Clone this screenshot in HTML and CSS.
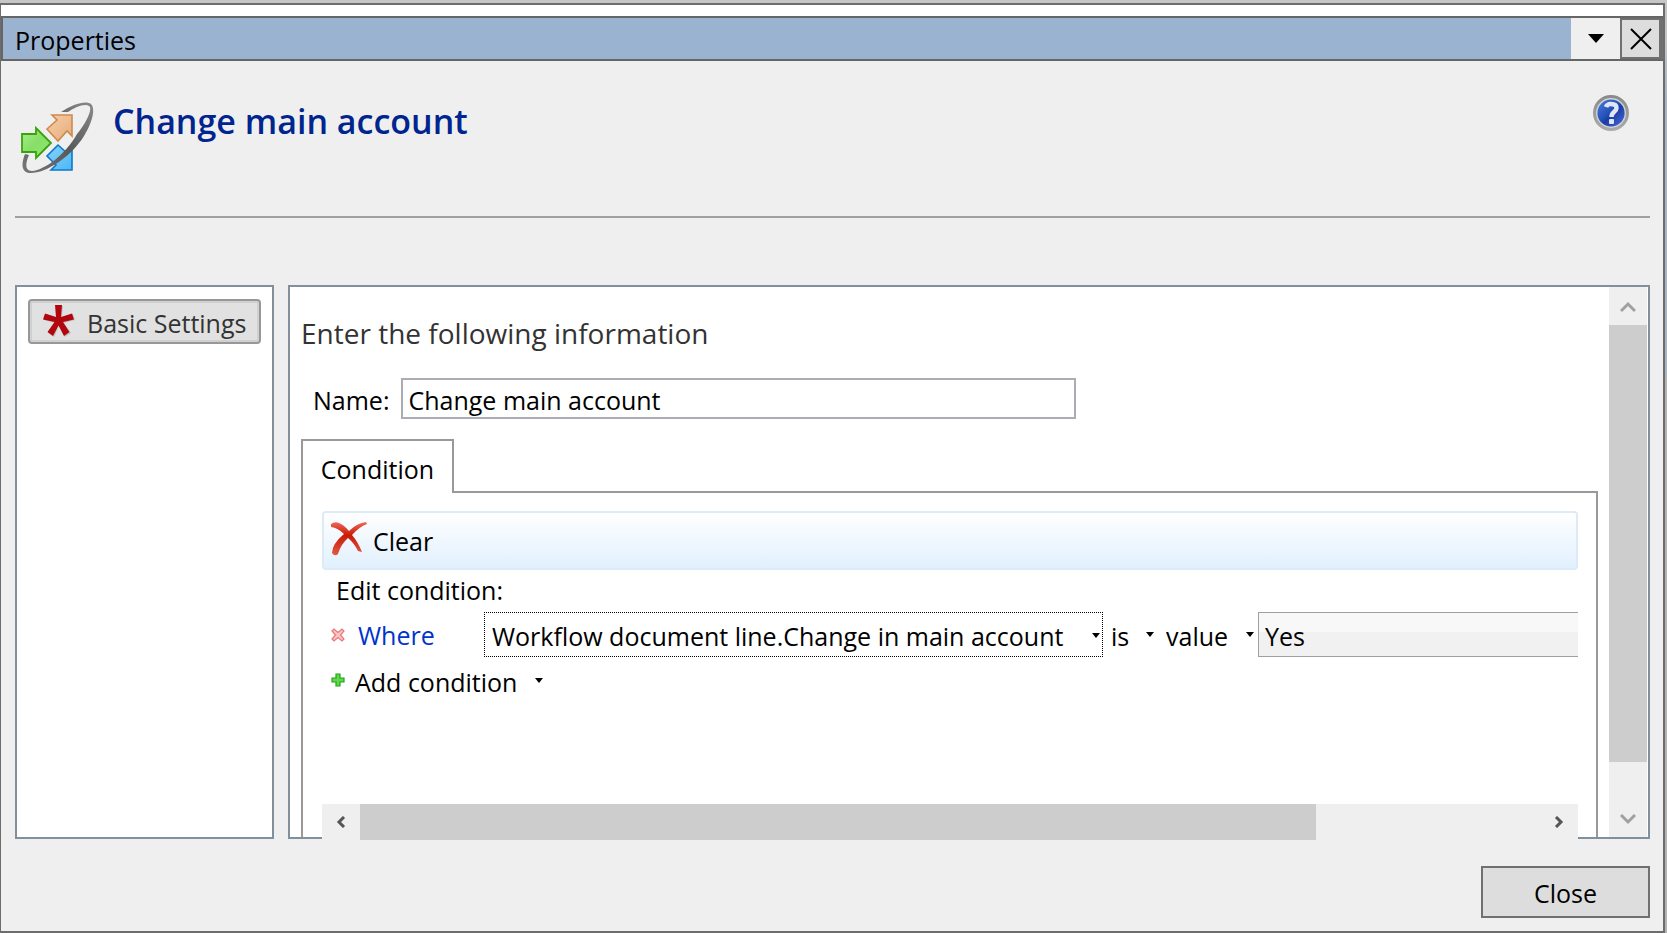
FILE: index.html
```html
<!DOCTYPE html>
<html lang="en">
<head>
<meta charset="utf-8">
<title>Properties</title>
<link rel="stylesheet" href="styles.css">
</head>
<body>
<div class="window">
  <header class="titlebar">
    <span class="titlebar-text">Properties</span>
    <button class="title-menu" aria-label="Window menu"><svg width="16" height="10" viewBox="0 0 16 10"><path d="M0 0H16L8 9Z"/></svg></button>
    <button class="title-close" aria-label="Close window"><svg width="22" height="22" viewBox="0 0 22 22"><path d="M1 1L21 21M21 1L1 21" stroke="#000" stroke-width="2" fill="none"/></svg></button>
  </header>

  <section class="banner">
    <svg class="logo" width="74" height="72" viewBox="0 0 74 72">
      <defs>
        <linearGradient id="green" x1="0" y1="0" x2="1" y2="1"><stop offset="0" stop-color="#a9ee8c"/><stop offset=".5" stop-color="#86df66"/><stop offset="1" stop-color="#92e874"/></linearGradient>
        <linearGradient id="orange" x1="0" y1="0" x2="1" y2="1"><stop offset="0" stop-color="#f8cfa6"/><stop offset="1" stop-color="#e5ab7c"/></linearGradient>
        <linearGradient id="blue" x1="0" y1="0" x2="1" y2="1"><stop offset="0" stop-color="#86d3fb"/><stop offset="1" stop-color="#4cb8f5"/></linearGradient>
        <linearGradient id="ring" x1="1" y1="0" x2="0" y2="1"><stop offset="0" stop-color="#8a8a8a"/><stop offset=".5" stop-color="#58595b"/><stop offset="1" stop-color="#777"/></linearGradient>
      </defs>
      <path d="M32 13H52V34L47 29L38 39L27 27L37 18Z" fill="url(#orange)" stroke="#cf8a50" stroke-width="1.6"/>
      <path d="M38 43L27 54L36 63L31 68H52V46L47 51Z" fill="url(#blue)" stroke="#0c78cc" stroke-width="1.6"/>
      <path d="M2 32H16V26L31 41L16 56V50H2Z" fill="url(#green)" stroke="#3aa30c" stroke-width="1.8"/>
      <path d="M41 10C53 2 66-2 71 2C76 7 72 21 64 34C51 55 26 71 11 71C1 71 1 62 5 52L9 53C5 62 5 69 12 69C25 68 46 52 57 32C67 20 73 6 69 4C65 1 55 5 48 10Z" fill="url(#ring)"/>
    </svg>
    <h1 class="heading">Change main account</h1>
    <button class="help" aria-label="Help">
      <svg width="38" height="38" viewBox="0 0 38 38">
        <defs>
          <linearGradient id="rim" x1="0" y1="0" x2="0" y2="1"><stop offset="0" stop-color="#8b8b8b"/><stop offset="1" stop-color="#aaa"/></linearGradient>
          <linearGradient id="ball" x1="0" y1="0" x2="1" y2="1"><stop offset="0" stop-color="#4c7ddb"/><stop offset=".45" stop-color="#2450b8"/><stop offset=".55" stop-color="#1a3da2"/><stop offset="1" stop-color="#4a6be0"/></linearGradient>
        </defs>
        <circle cx="19" cy="19" r="16.5" fill="#d3d3d3" stroke="url(#rim)" stroke-width="3"/>
        <circle cx="19" cy="19" r="13.6" fill="url(#ball)"/>
        <path d="M14 13Q15 10 19 10Q24.500 10 24.500 14Q24.500 16 22 18Q19.500 20 19.500 23" fill="none" stroke="#dfe6f8" stroke-width="4.500"/>
        <rect x="17" y="25" width="5" height="5" rx="1" fill="#dfe6f8"/>
      </svg>
    </button>
  </section>

  <main class="panels">
    <nav class="sidebar">
      <button class="nav-button">
        <svg width="34" height="34" viewBox="0 0 34 34">
          <path d="M14 1H21L20 12L31 9L33 15L22 18L29 28L23 32L17 21L12 32L6 28L13 18L2 15L4 9L14 12Z" fill="#999" opacity=".45"/>
          <path d="M13 0H20L19 12L30 8.500L32 14.500L21 17L27.500 27L22 31L16.500 20.500L11 31L5.500 27L12.500 17L1 14.500L3 8.500L14 12Z" fill="#b2060e"/>
        </svg>
        <span>Basic Settings</span>
      </button>
    </nav>

    <section class="content">
      <div class="form">
        <h2 class="intro">Enter the following information</h2>
        <div class="name-row">
          <label for="name">Name:</label>
          <input id="name" class="name-input" type="text" value="Change main account">
        </div>
        <div class="tabs" role="tablist">
          <button class="tab" role="tab" aria-selected="true">Condition</button>
          <span class="tab-line"></span>
        </div>
        <div class="tab-body">
          <div class="toolbar">
            <button class="clear">
              <svg width="36" height="34" viewBox="0 0 36 34">
                <defs><linearGradient id="cross" x1="0" y1="0" x2="0" y2="1"><stop offset="0" stop-color="#f0695c"/><stop offset=".4" stop-color="#c91a06"/><stop offset="1" stop-color="#e25848"/></linearGradient></defs>
                <path d="M0 2Q4-1 8 1Q13 3 18 9Q26 1 35 0L36 2Q28 5 21 13Q27 20 31 30L27 29Q23 21 17 16Q10 22 7 32Q4 35 1 31Q1 22 13 12Q7 6 0 5Z" fill="url(#cross)"/>
              </svg>
              <span>Clear</span>
            </button>
          </div>
          <p class="edit-label">Edit condition:</p>
          <div class="where-row">
            <button class="remove" aria-label="Remove condition"><svg width="14" height="14" viewBox="0 0 14 14"><path d="M1 3L3 1L7 4.500L11 1L13 3L9.500 7L13 11L11 13L7 9.500L3 13L1 11L4.500 7Z" fill="#fbc4c4" stroke="#e87878" stroke-width="1.200"/></svg></button>
            <a class="where" href="#">Where</a>
            <span class="pick pick-field"><select aria-label="Field"><option>Workflow document line.Change in main account</option></select></span>
            <span class="pick pick-operator"><select aria-label="Operator"><option>is</option></select></span>
            <span class="pick pick-kind"><select aria-label="Compare with"><option>value</option></select></span>
            <select class="value-select" aria-label="Value"><option>Yes</option></select>
          </div>
          <button class="add">
            <svg width="14" height="14" viewBox="0 0 14 14"><path d="M5 1H9V5H13V9H9V13H5V9H1V5H5Z" fill="#5fd84a" stroke="#27a01c" stroke-width="1.200"/></svg>
            <span>Add condition</span>
            <i class="arrow"></i>
          </button>
          <div class="scroll-x">
            <button class="scroll-button" aria-label="Scroll left"><svg width="10" height="12" viewBox="0 0 10 12"><path d="M8 1L3 6L8 11" fill="none" stroke="#555" stroke-width="3"/></svg></button>
            <div class="track-x"><div class="thumb-x"></div></div>
            <button class="scroll-button" aria-label="Scroll right"><svg width="10" height="12" viewBox="0 0 10 12"><path d="M2 1L7 6L2 11" fill="none" stroke="#555" stroke-width="3"/></svg></button>
          </div>
        </div>
      </div>
      <div class="scroll-y">
        <button class="scroll-button" aria-label="Scroll up"><svg width="16" height="12" viewBox="0 0 16 12"><path d="M1 10L8 3L15 10" fill="none" stroke="#a0a0a0" stroke-width="3"/></svg></button>
        <div class="track-y"><div class="thumb-y"></div></div>
        <button class="scroll-button" aria-label="Scroll down"><svg width="16" height="12" viewBox="0 0 16 12"><path d="M1 2L8 9L15 2" fill="none" stroke="#a0a0a0" stroke-width="3"/></svg></button>
      </div>
    </section>
  </main>

  <footer class="footer">
    <button class="close">Close</button>
  </footer>
</div>
</body>
</html>
```
FILE: styles.css
```css
* { box-sizing: border-box; }

body {
  margin: 0;
  min-height: 100vh;
  display: flex;
  padding: 3px 2px 0 0;
  background: linear-gradient(#c6c6c6 0, #c6c6c6 40px, #aab4c2 100px, #aab4c2 370px, #b4b4b4 380px);
  font-family: "Open Sans", "Noto Sans", sans-serif;
  font-size: 25px;
  line-height: 34px;
  color: #000;
}

button, input, select {
  font: inherit;
  color: inherit;
  margin: 0;
  padding: 0;
  border: 0;
  border-radius: 0;
  background: none;
}

svg { display: block; flex: none; }

.window {
  flex: 1;
  min-width: 0;
  display: flex;
  flex-direction: column;
  background: #efefef;
  border: solid #6d6d6d;
  border-width: 2px 2px 2px 1px;
}

.titlebar {
  display: flex;
  height: 45px;
  margin-top: 11px;
  border: solid #666;
  border-width: 2px 0 2px 2px;
  background: #99b3d1;
  box-shadow: 0 -11px #fff;
}
.titlebar-text { flex: 1; padding: 5px 12px 0; }
.title-menu {
  width: 49px;
  background: #efefef;
  display: flex;
  align-items: center;
  justify-content: center;
}
.title-close {
  width: 43px;
  background: #ddd;
  border: 2px solid #707070;
  border-right-width: 4px;
  display: flex;
  align-items: center;
  justify-content: center;
}

.banner {
  display: flex;
  align-items: flex-start;
  margin: 0 13px 0 14px;
  padding: 33px 20px 0 5px;
  height: 157px;
  border-bottom: 2px solid #a0a0a0;
}
.logo { margin-top: 8px; }
.heading {
  flex: 1;
  margin: 3px 0 0 19px;
  font-size: 34px;
  line-height: 48px;
  font-weight: 600;
  color: #00258f;
}
.help { height: 38px; }

.panels {
  flex: 1;
  display: flex;
  gap: 14px;
  margin: 67px 13px 0 14px;
}
.sidebar {
  width: 259px;
  flex: none;
  padding: 12px 11px;
  background: #fff;
  border: 2px solid #828f9c;
}
.nav-button {
  width: 100%;
  height: 45px;
  display: flex;
  align-items: center;
  gap: 11px;
  padding-left: 12px;
  white-space: nowrap;
  color: #333;
  background: #e1e1e1;
  border: 2px solid #989898;
  border-radius: 4px;
  box-shadow: inset 0 0 0 2px #d0d0d0;
}
.nav-button span { padding-top: 2px; }
.content {
  flex: 1;
  min-width: 0;
  display: flex;
  background: #fff;
  border: 2px solid #828f9c;
}
.form {
  flex: 1;
  min-width: 0;
  display: flex;
  flex-direction: column;
  padding: 27px 11px 0;
}
.intro {
  margin: 0;
  font-size: 28px;
  line-height: 38px;
  font-weight: 400;
  color: #333;
}
.name-row {
  display: flex;
  align-items: center;
  gap: 12px;
  margin: 26px 0 20px 12px;
}
.name-row label { padding-top: 2px; }
.name-input {
  width: 675px;
  height: 41px;
  padding: 2px 5px 0;
  background: #fff;
  border: 2px solid #abadb3;
}
.tabs { display: flex; align-items: flex-end; }
.tab {
  width: 153px;
  height: 54px;
  padding-top: 3px;
  border: solid #999;
  border-width: 2px 2px 0 2px;
}
.tab-line { flex: 1; height: 2px; background: #999; }
.tab-body {
  flex: 1;
  display: flex;
  flex-direction: column;
  padding: 18px 18px 0 19px;
  border: solid #999;
  border-width: 0 2px;
}
.toolbar {
  height: 59px;
  padding: 9px 7px;
  background: linear-gradient(#fff, #e1f0fe);
  border: 2px solid #deeaf6;
  border-radius: 4px;
}
.clear { display: flex; gap: 6px; }
.clear span { padding-top: 2px; }
.edit-label { margin: 3px 0 5px 14px; }
.where-row { display: flex; align-items: center; height: 45px; overflow: hidden; }
.remove { margin: 0 13px 0 9px; }
.where { width: 126px; color: #0033cc; text-decoration: none; }
.pick { display: flex; position: relative; height: 45px; }
.pick::after, .arrow {
  content: "";
  border: 4px solid transparent;
  border-top: 5px solid #000;
  border-bottom: 0;
}
.pick::after { position: absolute; right: 4px; top: 20px; }
.pick select { appearance: none; width: 100%; padding: 2px 0 0; }
.pick-field { width: 619px; border: 1px dotted #000; }
.pick-field::after { right: 2px; }
.pick-field select { padding-left: 7px; }
.pick-operator { width: 55px; padding-left: 8px; }
.pick-kind { width: 100px; padding-left: 8px; }
.value-select {
  appearance: none;
  flex: 1;
  min-width: 0;
  height: 45px;
  padding: 2px 0 0 6px;
  background: linear-gradient(#f8f8f8 45%, #f1f1f1 45%);
  border: solid #a0a0a0;
  border-width: 1px 0 1px 1px;
}
.add {
  display: flex;
  align-items: center;
  gap: 10px;
  margin: 8px 0 0 9px;
  align-self: flex-start;
}
.add svg { margin-bottom: 4px; }
.add .arrow { margin: 0 0 4px 8px; }
.scroll-x {
  display: flex;
  height: 36px;
  margin: auto 0 -3px;
  background: #efefef;
  position: relative;
}
.scroll-button {
  width: 38px;
  height: 38px;
  flex: none;
  display: flex;
  align-items: center;
  justify-content: center;
}
.scroll-x .scroll-button { height: 36px; }
.track-x { flex: 1; }
.thumb-x { width: 81%; height: 100%; background: #cdcdcd; }
.scroll-y {
  width: 39px;
  padding-top: 1px;
  display: flex;
  flex-direction: column;
  background: #efefef;
  border-right: 1px solid #fff;
}
.track-y { flex: 1; }
.thumb-y { height: 92%; background: #cdcdcd; }
.scroll-y .scroll-button { height: 37px; }

.footer { display: flex; justify-content: flex-end; padding: 27px 13px 13px; }
.close {
  width: 169px;
  height: 52px;
  padding-top: 2px;
  background: #ddd;
  border: 2px solid #707070;
}
```
